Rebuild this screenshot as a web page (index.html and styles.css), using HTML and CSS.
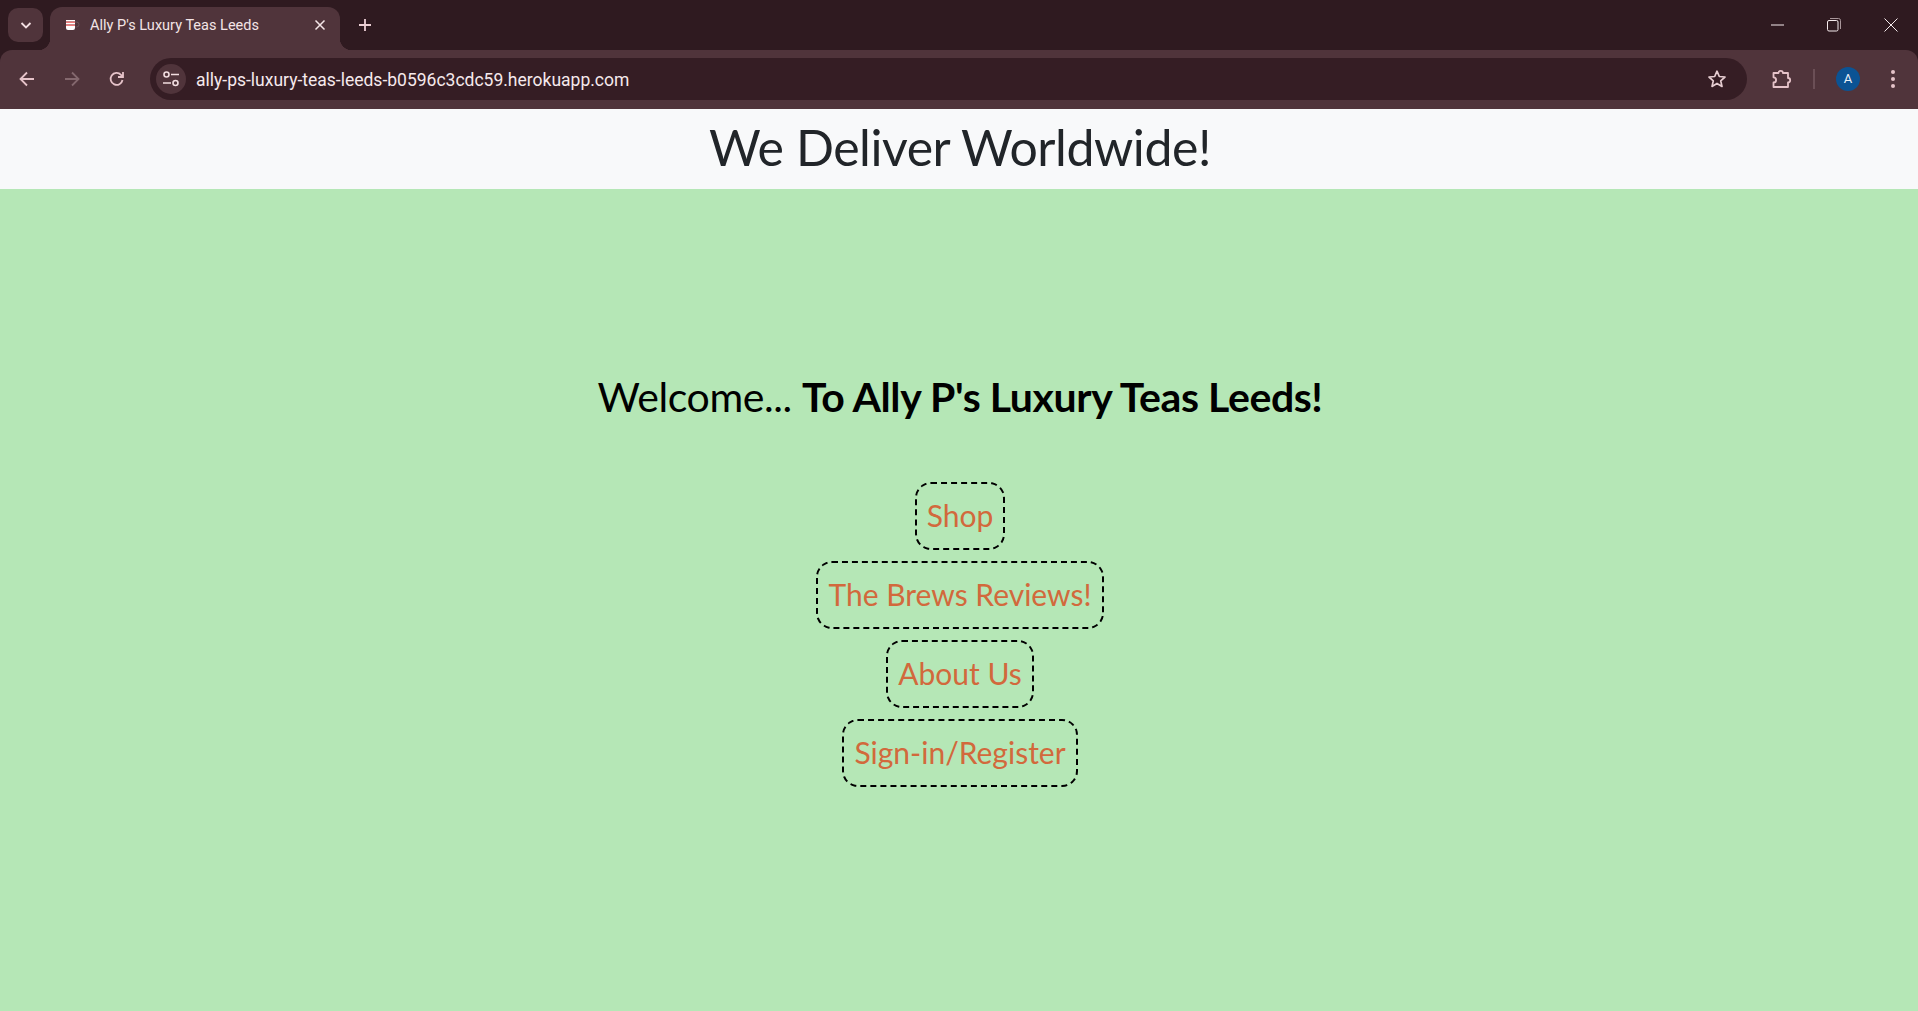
FILE: index.html
```html
<!DOCTYPE html>
<html lang="en">
<head>
<meta charset="utf-8">
<title>Ally P's Luxury Teas Leeds</title>
<link rel="stylesheet" href="styles.css">
</head>
<body>
<div class="browser">
  <div class="tabstrip">
    <button class="tab-search"><svg width="14" height="14" viewBox="0 0 14 14"><path d="M2.5 5l4.5 4.5L11.500 5" fill="none" stroke="#f3dfe2" stroke-width="1.800"/></svg></button>
    <div class="tab">
      <svg class="favicon" width="16" height="14" viewBox="0 0 16 14"><path d="M10 4h1.500a2 2 0 0 1 0 5H10" fill="none" stroke="#6b5056" stroke-width="1"/><path d="M1 2h9v1.500H1z" fill="#fff"/><path d="M1 3.500h9v1.500H1z" fill="#ef7b7b"/><path d="M1 5h9v1.500H1z" fill="#fff"/><path d="M1 6.500h9V8H1z" fill="#ef7b7b"/><path d="M1 8h9v2a2 2 0 0 1-2 2H3a2 2 0 0 1-2-2z" fill="#fff"/></svg>
      <span class="tab-title">Ally P's Luxury Teas Leeds</span>
      <svg class="tab-close" width="12" height="12" viewBox="0 0 12 12"><path d="M1.500 1.500l9 9M10.500 1.500l-9 9" stroke="#f5e6e8" stroke-width="1.500"/></svg>
    </div>
    <svg class="new-tab" width="14" height="14" viewBox="0 0 14 14"><path d="M7 1v12M1 7h12" stroke="#eccfd4" stroke-width="1.800"/></svg>
    <div class="window-controls">
      <svg width="14" height="14" viewBox="0 0 14 14"><path d="M1 7h13" stroke="#f5eaec" stroke-width="1"/></svg>
      <svg width="14" height="14" viewBox="0 0 14 14"><rect x="0.500" y="2.500" width="10.500" height="10.500" rx="1.500" fill="none" stroke="#f5eaec"/><path d="M3 .5h8.500a2 2 0 0 1 2 2V11" fill="none" stroke="#a9979b"/></svg>
      <svg width="14" height="14" viewBox="0 0 14 14"><path d="M.5.500l13 13M13.500.500l-13 13" stroke="#f5eaec" stroke-width="1"/></svg>
    </div>
  </div>
  <div class="toolbar">
    <div class="nav-icons">
      <svg width="18" height="18" viewBox="0 0 18 18"><path d="M16 9H3M9 2.500L2.500 9 9 15.500" fill="none" stroke="#e6c3c9" stroke-width="1.800"/></svg>
      <svg width="18" height="18" viewBox="0 0 18 18"><path d="M2 9h13M9 2.500L15.500 9 9 15.500" fill="none" stroke="#84686e" stroke-width="1.800"/></svg>
      <svg width="18" height="18" viewBox="0 0 18 18"><path d="M14.500 10a6 6 0 1 1-1.500-5.200L15 7M15 2v5h-5" fill="none" stroke="#e6c3c9" stroke-width="1.800"/></svg>
    </div>
    <div class="omnibox">
      <span class="site-info"><svg width="18" height="18" viewBox="0 0 18 18"><circle cx="4.500" cy="4.500" r="2.500" fill="none" stroke="#f1dde0" stroke-width="1.600"/><path d="M9 4.500h8M1 13h8" stroke="#f1dde0" stroke-width="1.600"/><circle cx="13.500" cy="13" r="2.500" fill="none" stroke="#f1dde0" stroke-width="1.600"/></svg></span>
      <span class="url">ally-ps-luxury-teas-leeds-b0596c3cdc59.herokuapp.com</span>
      <svg class="star" width="20" height="20" viewBox="0 0 20 20"><path d="M10 2.200l2.300 5.300 5.700.5-4.300 3.800 1.300 5.600-5-3-5 3 1.300-5.600L2 8l5.700-.5z" fill="none" stroke="#e6cdd1" stroke-width="1.700" stroke-linejoin="round"/></svg>
    </div>
    <div class="actions">
      <svg class="puzzle" width="22" height="22" viewBox="0 0 22 22"><path d="M2.500 5h5a2.200 2.200 0 0 1 4.400 0H17v5a2.200 2.200 0 0 1 0 4.400V19H2.500v-4.500a2.600 2.600 0 0 0 0-5.200z" fill="none" stroke="#e6c3c9" stroke-width="1.800" stroke-linejoin="round"/></svg>
      <span class="separator"></span>
      <span class="avatar">A</span>
      <svg class="dots" width="6" height="18" viewBox="0 0 6 18"><circle cx="3" cy="2" r="2" fill="#e6c3c9"/><circle cx="3" cy="9" r="2" fill="#e6c3c9"/><circle cx="3" cy="16" r="2" fill="#e6c3c9"/></svg>
    </div>
  </div>
</div>
<header class="banner">We Deliver Worldwide!</header>
<main class="hero">
  <h1 class="welcome">Welcome... <strong>To Ally P's Luxury Teas Leeds!</strong></h1>
  <nav class="links">
    <a class="link" href="#">Shop</a>
    <a class="link" href="#">The Brews Reviews!</a>
    <a class="link" href="#">About Us</a>
    <a class="link" href="#">Sign-in/Register</a>
  </nav>
</main>
</body>
</html>
```
FILE: styles.css
```css
* { box-sizing: border-box; }
html, body { margin: 0; height: 100%; }
body {
  display: flex;
  flex-direction: column;
  height: 1011px;
  overflow: hidden;
  background: #b5e7b6;
  font-family: "Lato", sans-serif;
}
.browser { background: #2f1a20; flex: none; }
.tabstrip {
  height: 50px;
  display: flex;
  align-items: flex-end;
  padding-left: 8px;
}
.tab-search {
  width: 35px;
  height: 34px;
  margin-bottom: 8px;
  border: 0;
  padding: 0;
  border-radius: 10px;
  background: #50343b;
  display: flex;
  align-items: center;
  justify-content: center;
}
.tab {
  position: relative;
  width: 290px;
  height: 43px;
  margin-left: 7px;
  padding: 0 14px 7px 15px;
  display: flex;
  align-items: center;
  background: #50343b;
  border-radius: 12px 12px 0 0;
  color: #f3e4e6;
}
.tab::before, .tab::after {
  content: "";
  position: absolute;
  bottom: 0;
  width: 12px;
  height: 12px;
  background: #50343b;
}
.tab::before {
  left: -12px;
  -webkit-mask: radial-gradient(circle at 0 0, transparent 12px, #000 12.500px);
  mask: radial-gradient(circle at 0 0, transparent 12px, #000 12.500px);
}
.tab::after {
  right: -12px;
  -webkit-mask: radial-gradient(circle at 100% 0, transparent 12px, #000 12.500px);
  mask: radial-gradient(circle at 100% 0, transparent 12px, #000 12.500px);
}
.favicon { flex: none; }
.tab-title {
  flex: 1;
  margin-left: 9px;
  font: 14.500px "Roboto", sans-serif;
  letter-spacing: 0.02px;
  white-space: nowrap;
}
.tab-close { flex: none; }
.new-tab { margin: 0 0 18px 18px; flex: none; }
.window-controls {
  margin-left: auto;
  align-self: flex-start;
  padding: 18px 20px 0 0;
  display: flex;
  gap: 43px;
}
.toolbar {
  height: 59px;
  padding: 8px 0 9px 18px;
  display: flex;
  align-items: center;
  background: #50343b;
  border-radius: 12px 12px 0 0;
}
.nav-icons { display: flex; gap: 27px; width: 132px; flex: none; }
.omnibox {
  width: 1597px;
  height: 42px;
  flex: none;
  padding: 0 20px 0 6px;
  display: flex;
  align-items: center;
  border-radius: 21px;
  background: #351d24;
}
.site-info {
  width: 30px;
  height: 30px;
  border-radius: 50%;
  background: #50343b;
  display: flex;
  align-items: center;
  justify-content: center;
  flex: none;
}
.url {
  margin-left: 10px;
  padding-top: 2px;
  font: 17.500px "Roboto", sans-serif;
  color: #f6e9ec;
  white-space: nowrap;
}
.star { margin-left: auto; }
.actions {
  flex: 1;
  display: flex;
  align-items: center;
  padding-left: 24px;
}
.separator { width: 2px; height: 20px; margin-left: 20px; background: #6b4f56; }
.avatar {
  width: 24px;
  height: 24px;
  margin-left: 21px;
  border-radius: 50%;
  background: #0b5394;
  color: #e9f0f7;
  font: 13px/24px "Roboto", sans-serif;
  text-align: center;
}
.dots { margin-left: 30px; }
.banner {
  height: 80px;
  flex: none;
  padding-left: 2px;
  background: #f8f9fa;
  color: #212529;
  font-size: 50px;
  line-height: 76px;
  font-weight: 400;
  letter-spacing: -0.45px;
  text-align: center;
}
.hero {
  flex: 1;
  display: flex;
  flex-direction: column;
  align-items: center;
  padding: 180px 0 0 2px;
}
.welcome {
  margin: 0;
  font-size: 41px;
  line-height: 56px;
  font-weight: 400;
  letter-spacing: -0.4px;
  color: #000;
  white-space: nowrap;
}
.welcome strong { font-weight: 700; }
.links {
  margin-top: 57px;
  display: flex;
  flex-direction: column;
  align-items: center;
  gap: 11px;
}
.link {
  height: 68px;
  padding: 0 10px 2px;
  display: flex;
  align-items: center;
  border: 2px dashed #000;
  border-radius: 16px;
  color: #d2693c;
  font-size: 30px;
  font-weight: 400;
  text-decoration: none;
}
```
